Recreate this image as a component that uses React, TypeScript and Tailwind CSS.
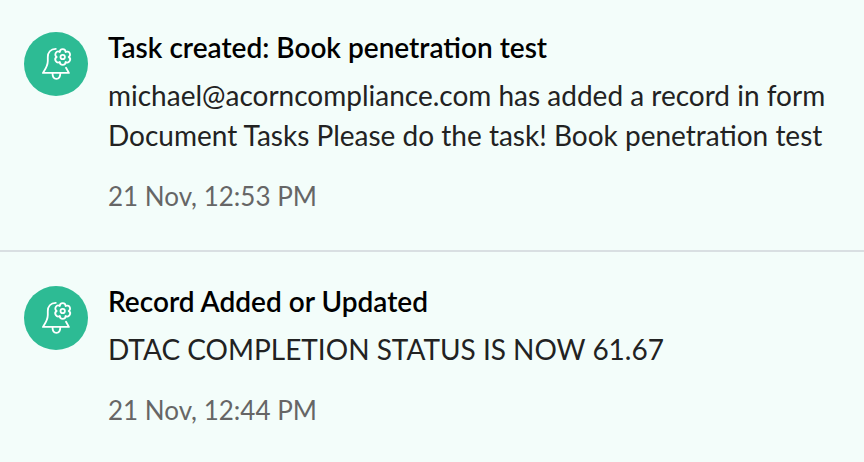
type Notice = { title: string; message: string; time: string };

const notices: Notice[] = [
  {
    title: "Task created: Book penetration test",
    message:
      "michael@acorncompliance.com has added a record in form Document Tasks Please do the task! Book penetration test",
    time: "21 Nov, 12:53 PM",
  },
  {
    title: "Record Added or Updated",
    message: "DTAC COMPLETION STATUS IS NOW 61.67",
    time: "21 Nov, 12:44 PM",
  },
];

function BellGearIcon() {
  return (
    <svg viewBox="0 0 64 64" className="size-16" fill="none" stroke="#fff" strokeWidth="1.8" strokeLinecap="round" strokeLinejoin="round" aria-hidden="true">
      <path d="M31.800 16.800C26.500 17 23.800 20.500 23.800 25v4c0 5-2 7.500-4.900 11.900h26L42 35.700" />
      <path d="M28.500 41.200c0 3.600 1.400 5.600 3.900 5.600s3.900-2 3.900-5.600" />
      <circle cx="38.700" cy="25" r="2.200" />
      <path d="M35.800 20a2.900 2.900 0 0 1 5.800 0a2.900 2.900 0 0 1 3.100 5a2.900 2.900 0 0 1-3.100 5a2.900 2.900 0 0 1-5.800 0a2.900 2.900 0 0 1-3.100-5a2.900 2.900 0 0 1 3.100-5Z" />
    </svg>
  );
}

export default function App() {
  return (
    <main className="min-h-screen bg-[#f3fdfa] font-['Lato',sans-serif]">
      <ul className="flex flex-col gap-0.5">
        {notices.map((n) => (
          <li key={n.title} className="flex gap-5 border-b-2 border-[#d9dfe2] px-6 pt-8 pb-[37px] last:border-b-0">
            <div className="size-16 shrink-0 rounded-full bg-[#2dbb94]">
              <BellGearIcon />
            </div>
            <article className="min-w-0 flex-1">
              <h2 className="text-[28px] leading-[30px] font-semibold text-black">{n.title}</h2>
              <p className="mt-[13px] text-[28px] leading-10 text-[#222]">{n.message}</p>
              <time className="mt-6 block text-[26px] leading-[34px] text-[#666]">{n.time}</time>
            </article>
          </li>
        ))}
      </ul>
    </main>
  );
}
